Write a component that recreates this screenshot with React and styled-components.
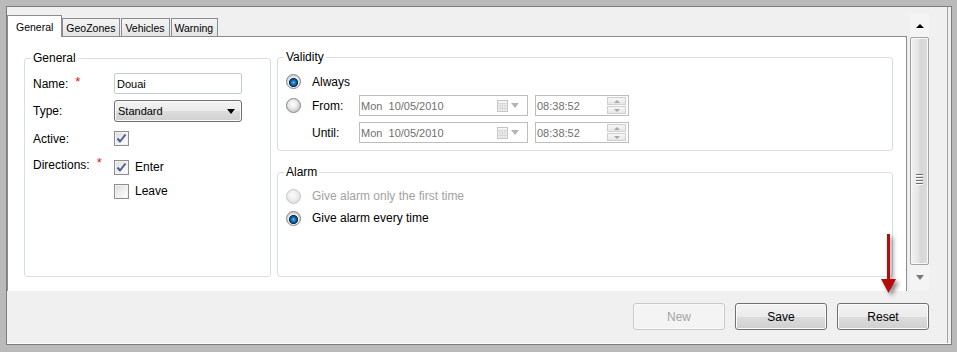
import React from 'react';
import styled, { createGlobalStyle } from 'styled-components';

const GlobalStyle = createGlobalStyle`
  html, body { margin: 0; padding: 0; background: #fff; }
  body {
    font-family: "Liberation Sans", Arial, sans-serif;
    font-size: 12px;
    color: #000;
  }
  * { box-sizing: border-box; }
`;

const Frame = styled.div`
  width: 957px;
  height: 352px;
  background: #bababa;
  padding: 6px 5px 7px 6px;
`;

const Window = styled.div`
  position: relative;
  height: 100%;
  display: flex;
  flex-direction: column;
  background: #f0f0f0;
  border: 1px solid #7d7d7d;
  box-shadow: inset 0 -1px 0 #fff, inset -3px 0 0 #f0f0f0, inset -4px 0 0 #a2a2a2;
`;

const Body = styled.div`
  flex: 1;
  min-height: 0;
  display: flex;
  padding: 7px 22px 0 0;
`;

const TabArea = styled.div`
  flex: 1;
  display: flex;
  flex-direction: column;
`;

const TabStrip = styled.div`
  position: relative;
  z-index: 1;
  height: 23px;
  margin-bottom: -1px;
  display: flex;
  align-items: flex-end;
`;

const Tab = styled.div`
  display: flex;
  align-items: center;
  font-size: 10.5px;
  border: 1px solid #898c95;
  border-bottom: none;
  ${(p) =>
    p.$active
      ? `
    height: 22px;
    padding: 0 8px 0 8px;
    background: #fff;
  `
      : `
    height: 18px;
    margin-bottom: 1px;
    margin-left: ${p.$first ? 0 : 1}px;
    padding: 0 4px 0 3px;
    background: linear-gradient(#f4f4f4, #e4e4e4);
  `}
`;

const Panel = styled.div`
  flex: 1;
  display: grid;
  grid-template-columns: 247px 1fr;
  column-gap: 6px;
  padding: 14px 13px 14px 16px;
  background: #fff;
  border: 1px solid #898c95;
  border-bottom: none;
`;

const Group = styled.fieldset`
  margin: 0;
  min-width: 0;
  border: 1px solid #d5dfe5;
  border-radius: 3px;
  padding: ${(p) => p.$pad};
  display: flex;
  flex-direction: column;
  flex: ${(p) => (p.$grow ? 1 : 'none')};
`;

const Legend = styled.legend`
  padding: 0 2px;
  margin-left: -2px;
  line-height: 14px;
  font-size: 12px;
`;

const RightColumn = styled.div`
  display: flex;
  flex-direction: column;
  gap: 14px;
  margin-top: -1px;
`;

const FieldRow = styled.div`
  display: flex;
  align-items: ${(p) => p.$align || 'center'};
  margin-top: ${(p) => p.$top || 0}px;
`;

const FieldLabel = styled.div`
  width: 81px;
  flex: none;
  line-height: 14px;
  margin-top: ${(p) => p.$shift || 0}px;
`;

const Required = styled.span`
  color: #e3141c;
  font-size: 13px;
  margin-left: 7px;
  position: relative;
  top: -2px;
`;

const TextInput = styled.input`
  width: 128px;
  height: 21px;
  border: 1px solid #c1cbd4;
  border-radius: 2px;
  padding: 0 2px;
  font-family: "Liberation Sans", Arial, sans-serif;
  font-size: 11px;
  color: #000;
  background: #fff;
  outline: none;
`;

const Select = styled.div`
  width: 128px;
  height: 22px;
  display: flex;
  align-items: center;
  justify-content: space-between;
  padding: 0 6px 0 3px;
  border: 1px solid #707070;
  border-radius: 3px;
  font-size: 11px;
  background: linear-gradient(#f2f2f2 0%, #ebebeb 50%, #dddddd 51%, #d0d0d0 100%);
  box-shadow: inset 0 0 0 1px #fafafa;
`;

const DownCaret = styled.span`
  width: 0;
  height: 0;
  border-left: 4.5px solid transparent;
  border-right: 4.5px solid transparent;
  border-top: 5px solid ${(p) => p.$color || '#000'};
`;

const UpCaret = styled.span`
  width: 0;
  height: 0;
  border-left: 4px solid transparent;
  border-right: 4px solid transparent;
  border-bottom: 4px solid ${(p) => p.$color || '#000'};
`;

const CheckBox = styled.span`
  width: 15px;
  height: 15px;
  flex: none;
  display: inline-flex;
  align-items: center;
  justify-content: center;
  border: 1px solid #8e8f8f;
  background: linear-gradient(135deg, #dcdcdc, #f6f6f6 70%, #fff);
  box-shadow: inset 0 0 0 1px #f2f2f2;
`;

const OptionColumn = styled.div`
  display: flex;
  flex-direction: column;
  gap: 9px;
`;

const Option = styled.label`
  display: flex;
  align-items: center;
  gap: 6px;
  line-height: 15px;
  color: ${(p) => (p.$disabled ? '#a2a2a2' : '#000')};
`;

const Radio = styled.span`
  width: 15px;
  height: 15px;
  flex: none;
  border-radius: 50%;
  border: 1px solid ${(p) => (p.$disabled ? '#c6c6c6' : '#858585')};
  background: ${(p) =>
    p.$checked
      ? 'radial-gradient(circle at 50% 58%, #5cc0f2 0, #1d7cc2 1.8px, #0c416f 3.6px, #0a2c4e 4.2px, #f2f2f2 4.9px, #d2d2d2 6.6px)'
      : p.$disabled
      ? 'radial-gradient(circle at 45% 40%, #fbfbfb 0, #f0f0f0 4px, #e2e2e2 7px)'
      : 'radial-gradient(circle at 45% 40%, #ffffff 0, #ececec 4px, #cfcfcf 7px)'};
`;

const ValidityRow = styled.div`
  display: flex;
  align-items: center;
  height: ${(p) => p.$h}px;
  margin-top: ${(p) => p.$top || 0}px;
`;

const RadioCell = styled.div`
  width: 26px;
  flex: none;
  display: flex;
`;

const RowLabel = styled.div`
  width: 47px;
  flex: none;
`;

const DateBox = styled.div`
  width: 169px;
  height: 21px;
  display: flex;
  align-items: center;
  justify-content: space-between;
  padding: 0 8px 0 1px;
  border: 1px solid #bdbdbd;
  font-size: 11px;
  color: #6f6f6f;
  white-space: pre;
  background: #fff;
`;

const DateTools = styled.div`
  display: flex;
  align-items: center;
  gap: 3px;
`;

const TimeBox = styled.div`
  width: 94px;
  height: 21px;
  margin-left: 7px;
  display: flex;
  align-items: center;
  justify-content: space-between;
  padding: 0 2px 0 1px;
  border: 1px solid #bdbdbd;
  font-size: 11px;
  color: #6f6f6f;
  background: #fff;
`;

const Spinner = styled.div`
  display: flex;
  flex-direction: column;
  gap: 1px;
`;

const SpinButton = styled.div`
  width: 19px;
  height: 8px;
  display: flex;
  align-items: center;
  justify-content: center;
  border: 1px solid #cfcfcf;
  background: linear-gradient(#f7f7f7, #e6e6e6);
`;

const SmallUp = styled.span`
  border-left: 3px solid transparent;
  border-right: 3px solid transparent;
  border-bottom: 3px solid #a8a8a8;
`;

const SmallDown = styled.span`
  border-left: 3px solid transparent;
  border-right: 3px solid transparent;
  border-top: 3px solid #a8a8a8;
`;

const ScrollBar = styled.div`
  width: 19px;
  height: 276px;
  margin-left: 3px;
  display: flex;
  flex-direction: column;
  background: #f0f0f0;
`;

const ScrollButton = styled.div`
  height: ${(p) => p.$h}px;
  display: flex;
  align-items: center;
  justify-content: center;
  background: #f4f4f4;
`;

const Thumb = styled.div`
  flex: 1;
  display: flex;
  flex-direction: column;
  align-items: center;
  padding-top: 136px;
  gap: 2px;
  border: 1px solid #a3a3a3;
  border-radius: 2px;
  background: linear-gradient(90deg, #f3f3f3 0%, #e6e6e6 40%, #d6d6d6 60%, #dcdcdc 100%);
  box-shadow: inset 0 0 0 1px #f8f8f8;
`;

const Grip = styled.span`
  width: 7px;
  height: 1px;
  background: #6e6e6e;
  box-shadow: 0 1px 0 #fff;
`;

const ButtonBar = styled.div`
  height: 53px;
  flex: none;
  display: flex;
  justify-content: flex-end;
  align-items: flex-start;
  gap: 10px;
  padding: 12px 22px 0 0;
`;

const Button = styled.button`
  width: 92px;
  height: 27px;
  padding: 0;
  border-radius: 3px;
  font-family: "Liberation Sans", Arial, sans-serif;
  font-size: 12px;
  border: 1px solid ${(p) => (p.disabled ? '#cacaca' : '#707070')};
  color: ${(p) => (p.disabled ? '#a4a4a4' : '#000')};
  background: ${(p) =>
    p.disabled
      ? '#f4f4f4'
      : 'linear-gradient(#f3f3f3 0%, #ebebeb 50%, #dddddd 51%, #cfcfcf 100%)'};
  box-shadow: inset 0 0 0 1px ${(p) => (p.disabled ? '#f8f8f8' : '#fcfcfc')};
`;

const Pointer = styled.svg`
  position: absolute;
  left: 873px;
  top: 226px;
  filter: drop-shadow(3px 3px 2px rgba(0, 0, 0, 0.45));
`;

const Tick = () => (
  <svg width="11" height="11" viewBox="0 0 11 11">
    <path d="M1.5 5.5 L4 8.5 L9.5 1.5" fill="none" stroke="#4b5d8a" strokeWidth="2" strokeLinejoin="round" />
  </svg>
);

const CalendarIcon = () => (
  <svg width="11" height="12" viewBox="0 0 11 12">
    <rect x="0.5" y="0.5" width="10" height="11" fill="#f4f4f4" stroke="#c4c4c4" />
    <path d="M0.5 3.5 H10.5 M0.5 6 H10.5 M0.5 8.5 H10.5 M3 3.5 V11.5 M5.5 3.5 V11.5 M8 3.5 V11.5" stroke="#d6d6d6" strokeWidth="1" />
  </svg>
);

const DateField = ({ value }) => (
  <DateBox>
    <span>{value}</span>
    <DateTools>
      <CalendarIcon />
      <DownCaret $color="#b4b4b4" />
    </DateTools>
  </DateBox>
);

const TimeField = ({ value }) => (
  <TimeBox>
    <span>{value}</span>
    <Spinner>
      <SpinButton>
        <SmallUp />
      </SpinButton>
      <SpinButton>
        <SmallDown />
      </SpinButton>
    </Spinner>
  </TimeBox>
);

export default function App() {
  return (
    <>
      <GlobalStyle />
      <Frame>
        <Window>
          <Body>
            <TabArea>
              <TabStrip>
                <Tab $active>General</Tab>
                <Tab $first>GeoZones</Tab>
                <Tab>Vehicles</Tab>
                <Tab>Warning</Tab>
              </TabStrip>
              <Panel>
                <Group $pad="8px 8px 8px">
                  <Legend>General</Legend>
                  <FieldRow>
                    <FieldLabel>
                      Name:<Required>*</Required>
                    </FieldLabel>
                    <TextInput defaultValue="Douai" readOnly />
                  </FieldRow>
                  <FieldRow $top={6}>
                    <FieldLabel>Type:</FieldLabel>
                    <Select>
                      <span>Standard</span>
                      <DownCaret />
                    </Select>
                  </FieldRow>
                  <FieldRow $top={9}>
                    <FieldLabel>Active:</FieldLabel>
                    <CheckBox>
                      <Tick />
                    </CheckBox>
                  </FieldRow>
                  <FieldRow $top={14} $align="flex-start">
                    <FieldLabel $shift={-2}>
                      Directions:<Required>*</Required>
                    </FieldLabel>
                    <OptionColumn>
                      <Option>
                        <CheckBox>
                          <Tick />
                        </CheckBox>
                        Enter
                      </Option>
                      <Option>
                        <CheckBox />
                        Leave
                      </Option>
                    </OptionColumn>
                  </FieldRow>
                </Group>

                <RightColumn>
                  <Group $pad="10px 8px 7px">
                    <Legend>Validity</Legend>
                    <ValidityRow $h={15}>
                      <RadioCell>
                        <Radio $checked />
                      </RadioCell>
                      Always
                    </ValidityRow>
                    <ValidityRow $h={21} $top={6}>
                      <RadioCell>
                        <Radio />
                      </RadioCell>
                      <RowLabel>From:</RowLabel>
                      <DateField value="Mon  10/05/2010" />
                      <TimeField value="08:38:52" />
                    </ValidityRow>
                    <ValidityRow $h={21} $top={6}>
                      <RadioCell />
                      <RowLabel>Until:</RowLabel>
                      <DateField value="Mon  10/05/2010" />
                      <TimeField value="08:38:52" />
                    </ValidityRow>
                  </Group>

                  <Group $grow $pad="10px 8px 8px">
                    <Legend>Alarm</Legend>
                    <ValidityRow $h={15}>
                      <RadioCell>
                        <Radio $disabled />
                      </RadioCell>
                      <Option $disabled>Give alarm only the first time</Option>
                    </ValidityRow>
                    <ValidityRow $h={15} $top={7}>
                      <RadioCell>
                        <Radio $checked />
                      </RadioCell>
                      <Option>Give alarm every time</Option>
                    </ValidityRow>
                  </Group>
                </RightColumn>
              </Panel>
            </TabArea>

            <ScrollBar>
              <ScrollButton $h={23}>
                <UpCaret />
              </ScrollButton>
              <Thumb>
                <Grip />
                <Grip />
                <Grip />
                <Grip />
              </Thumb>
              <ScrollButton $h={25}>
                <DownCaret $color="#7a7a7a" />
              </ScrollButton>
            </ScrollBar>
          </Body>

          <ButtonBar>
            <Button disabled>New</Button>
            <Button>Save</Button>
            <Button>Reset</Button>
          </ButtonBar>

          <Pointer width="24" height="70" viewBox="0 0 24 70">
            <rect x="7" y="1" width="3" height="49" fill="#b80a0a" />
            <polygon points="1,46 16,46 8.5,60" fill="#b80a0a" />
          </Pointer>
        </Window>
      </Frame>
    </>
  );
}
